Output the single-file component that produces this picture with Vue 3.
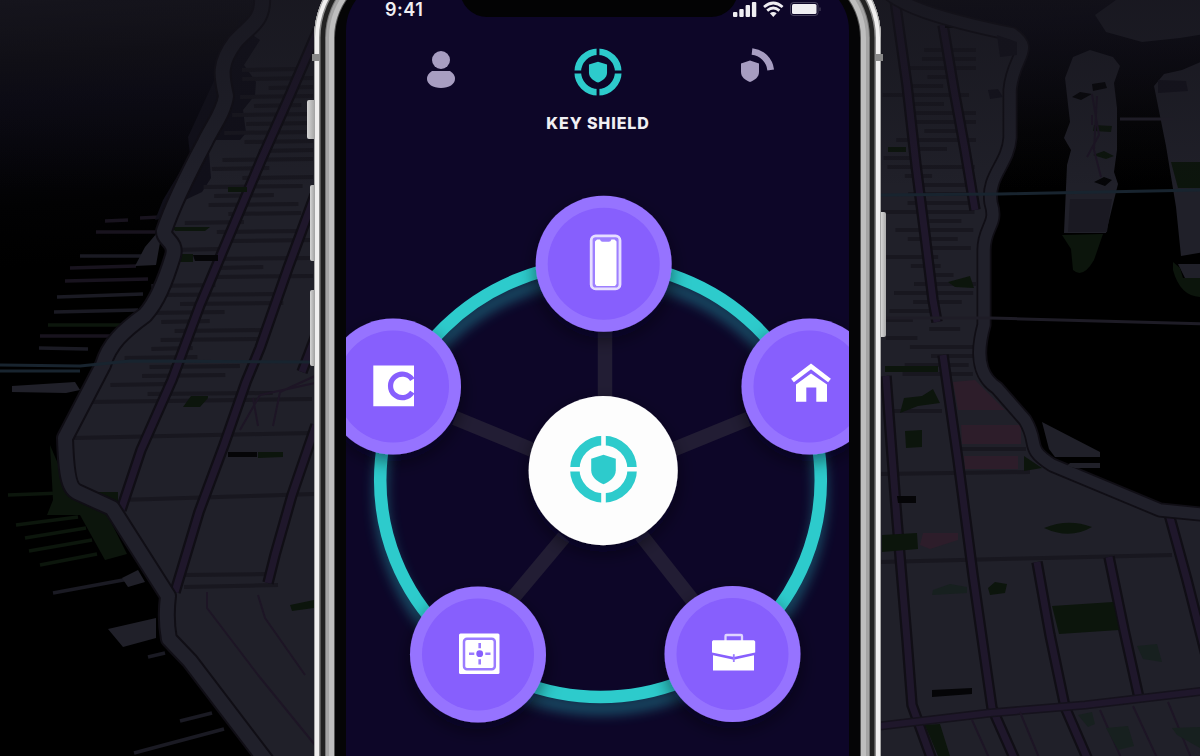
<script setup>
const nodes = [
  { id: 'phone', x: 603.7, y: 263.7 },
  { id: 'vault', x: 393, y: 386.5 },
  { id: 'home', x: 809.5, y: 386.5 },
  { id: 'safe', x: 478, y: 654.5 },
  { id: 'work', x: 732.5, y: 654 },
]

const spokes = ['M605 300V420', 'M455 418 535 451', 'M748 419 672 450', 'M512 599 564 537', 'M697 606 641 535']

const leftCoast = 'M262 -5C264 22 250 25 235 42C218 65 222 77 226 96C224 112 212 127 205 142C188 174 172 207 164 231C163 240 177 241 173 256C165 282 157 302 145 315C123 331 109 344 103 365L65 438C66 470 68 488 77 492L112 508L168 596C165 620 168 633 169 639L190 661L270 766'
const rightCoast = 'M885 -10C900 5 935 18 1012 34C1035 50 1013 55 1010 90V138C1008 165 987 175 991 203C998 225 984 226 984 250V325C973 365 985 380 997 388L1025 420C1040 445 1024 447 1052 465L1160 510L1210 515'

const avenues = [
  'M318 30 290 95 262 158 235 222 200 305 172 380 141 450 121 510',
  'M315 195 288 268 260 348 246 382 224 445 199 512 175 592',
  'M318 330 302 372', 'M316 425 292 495 275 555 268 583',
  'M895 0 907 85 916 165 925 235 933 300 937 322',
  'M943 25 954 90 965 150 975 210',
  'M886 376 892 455 897 520 907 640 912 705 932 760',
  'M943 355 958 460 973 575 992 708 1015 760',
  'M1037 562 1050 635 1065 707 1088 760',
  'M1109 557 1124 630 1139 698',
  'M1169 514 1187 580 1206 655',
]

// Cross streets: x start, x end, y start, y end
const streets = [
  [88, 312, 402, 399], [74, 312, 438, 433], [120, 314, 500, 494], [184, 270, 575, 574], [184, 278, 587, 585],
  [880, 1030, 474, 472], [880, 1172, 562, 555], [960, 1026, 449, 449], [884, 942, 411, 411],
]
let seed = 17
const rnd = () => ((seed = (seed * 16807) % 2147483647) / 2147483647)
for (let y = 70; y < 395; y += 9) {
  const left = y < 200 ? 242 - (y - 70) * 0.35 : 188 - (y - 200) * 0.43
  const a = left + rnd() * 60
  streets.push([a, Math.min(313, a + 35 + rnd() * 95), y, y - 1])
  const b = 882 + rnd() * 50
  streets.push([b, Math.min(976, b + 25 + rnd() * 75), y - 20, y - 20])
}

// Piers: x start, y start, x end, y end, colour group
const piers = [
  [105, 221, 128, 220, 'v'], [140, 218, 160, 217, 'v'], [96, 232, 155, 232, 'v'], [80, 256, 142, 256, 's'],
  [70, 268, 136, 266, 'v'], [65, 281, 148, 279, 'v'], [57, 297, 143, 294, 's'], [54, 312, 138, 310, 's'],
  [48, 325, 128, 325, 'g'], [40, 336, 110, 336, 'v'], [39, 348, 88, 349, 's'], [8, 495, 62, 493, 'g'],
  [16, 525, 78, 517, 'g'], [25, 538, 86, 528, 'g'], [29, 551, 92, 540, 'g'], [40, 565, 97, 554, 'g'],
  [53, 593, 134, 578, 's'], [148, 657, 165, 653, 's'], [180, 721, 212, 713, 's'], [134, 753, 224, 729, 's'],
]
const bars = [5, 8, 12, 15]
</script>

<template>
  <main class="scene">
    <svg class="map" viewBox="0 0 1200 756" aria-hidden="true">
      <defs>
        <linearGradient id="water" x1="0" y1="0" x2="0.12" y2="1">
          <stop offset="0" stop-color="#16151d" /><stop offset=".08" stop-color="#0d0c12" />
          <stop offset=".13" stop-color="#090812" /><stop offset=".27" stop-color="#020203" /><stop offset=".35" stop-color="#000" />
        </linearGradient>
        <linearGradient id="fade" x1="0" y1="0" x2="0" y2="1">
          <stop offset="0" stop-color="#15141c" stop-opacity=".65" /><stop offset=".25" stop-color="#121118" stop-opacity="0" />
        </linearGradient>
      </defs>
      <rect width="1200" height="756" fill="url(#water)" />
      <g class="piers"><line v-for="(p, i) in piers" :key="i" :class="p[4]" :x1="p[0]" :y1="p[1]" :x2="p[2]" :y2="p[3]" /></g>
      <path class="land" d="M12 386 75 382 80 390 66 393 12 392ZM108 629 156 618V638L123 647ZM122 578 138 570 145 582 128 587ZM163 226 145 247 135 266 156 265Z" />
      <path class="park" d="M50 445 53 500 47 515 80 515 105 560 127 554 105 510 70 492Z" />
      <path class="cove" d="M240 20 212 85 188 137 190 155 163 200 155 220 180 215 215 155 230 100 244 60Z" />
      <path class="land" :d="leftCoast + 'H330V-5Z'" />
      <path class="cove" d="M245 30 260 40 244 65 256 82 255 95 243 110 246 133 240 140 208 140 211 178 202 192 185 200 205 150 230 100 230 55Z" />
      <path class="land" :d="rightCoast + 'V760H870V-10Z'" />
      <path class="rose" d="M953 382 975 380 1005 410H958ZM961 425H1021V444H962ZM964 456H1018V469H965ZM923 533H958V540L930 549 920 545Z" />
      <g class="streets"><line v-for="(s, i) in streets" :key="i" :x1="s[0]" :x2="s[1]" :y1="s[2]" :y2="s[3]" /></g>
      <g class="avenue-edge"><path v-for="a in avenues" :key="a" :d="a" /></g>
      <g class="avenue"><path v-for="a in avenues" :key="a" :d="a" /></g>
      <path class="avenue-edge cross" d="M880 726 990 713 1085 705 1205 691" />
      <path class="avenue cross" d="M880 726 990 713 1085 705 1205 691" />
      <path class="lane" d="M207 592V608L258 675 315 745M258 595 265 618 305 675M972 720 990 760M1020 712 1040 760M1100 710 1122 760M1133 706 1158 760M1168 702 1192 760M240 430 260 395 315 383M258 426 253 398M273 426 280 392 315 376" />
      <path class="park" d="M228 187H247V192H228ZM172 227H210L205 231H175ZM180 254H193V262H180ZM83 492H118V501L108 503ZM191 396H208V398L200 407H183ZM258 452H283V457L258 458ZM290 605 314 600V608L292 611ZM904 398 922 396 933 389 940 403 918 406 900 413ZM905 431 922 430 922 447 906 448ZM882 535 917 533 918 549 882 552ZM1024 456 1042 468 1024 471ZM1044 528Q1068 518 1092 527Q1070 540 1044 528ZM988 588 995 582 1007 584 1005 593 990 595ZM1052 606 1113 602 1119 630 1059 634ZM925 725 940 724 950 756 938 756ZM888 147H906V152H888ZM948 282 970 276 974 288 955 287ZM885 366H938V372H885ZM1173 518 1200 518V521Z" />
      <path class="teal" d="M933 590 950 584 967 587V593L932 595ZM1137 646 1157 644 1162 662 1143 659ZM1078 715 1092 712 1095 724 1088 727ZM1106 728 1128 726 1134 746 1118 750ZM1172 728 1200 727V748L1177 735Z" />
      <path class="hole" d="M193 255H218V261H195ZM228 452H257V457H228ZM897 496H916V503H898ZM932 690 972 688V694L932 697ZM945 24H970V28H945Z" />
      <path class="coast-edge left" :d="leftCoast" /><path class="coast left" :d="leftCoast" />
      <path class="coast-edge" :d="rightCoast" /><path class="coast" :d="rightCoast" />
      <path class="land" d="M1042 422 1100 452V457H1055L1049 449ZM1067 466 1070 463H1100V468H1075Z" />
      <path class="land" d="M1065 78 1073 57 1090 50 1113 57 1120 66 1114 83 1117 108V150L1114 172 1118 184 1113 204 1106 233H1064L1067 165 1071 150 1064 138 1070 122Z" />
      <path class="park" d="M1062 235 1103 234 1094 260Q1083 279 1073 270L1071 249Z" />
      <path class="park" d="M1094 125 1112 126 1111 132 1093 131ZM1093 155 1104 151 1114 156 1106 159Z" />
      <path class="hole" d="M1072 97 1080 92 1092 94 1081 100ZM1092 84 1105 82 1107 88 1093 91ZM1094 182 1104 177 1112 180 1105 186Z" />
      <path class="lane" d="M1092 94 1099 135 1087 157M1097 96 1094 150 1101 177M1092 115V125" />
      <path class="land" d="M1095 15 1116 0H1205V34L1180 38 1142 42 1106 32ZM1154 86 1164 74 1182 70 1205 60V252L1181 256 1176 207 1166 146ZM1178 264H1205V278H1185Z" />
      <path class="park" d="M1171 162H1200V188H1178ZM1173 262 1180 268 1183 278H1200V297Q1180 296 1173 270Z" />
      <path class="deep" d="M1158 80 1186 81 1188 91 1158 93ZM997 35 1017 42V55L1000 57ZM988 90 998 89 1003 97 990 99Z" />
      <path class="shade" d="M1070 199H1112L1107 232H1068Z" />
      <rect width="1200" height="756" fill="url(#fade)" />
      <path class="water-line" d="M0 365 80 366 130 361 314 362M0 371 80 371M880 195 1000 194 1205 190" />
      <path class="bridge" d="M880 318 990 318 1205 324M1120 119H1173" />
    </svg>

    <section class="phone">
      <i class="button mute"></i><i class="button up"></i><i class="button down"></i><i class="button power"></i>
      <i class="band west"></i><i class="band east"></i>
      <div class="screen">
        <div class="notch"></div>
        <header class="status">
          <span class="time">9:41</span>
          <svg class="signals" viewBox="0 0 92 20" width="92" height="20">
            <g fill="#efeef2">
              <rect v-for="(h, i) in bars" :key="h" :x="2 + i * 6.3" :y="17 - h" width="4.4" :height="h" rx="1" />
              <path d="M42.3 17 38.9 13.3Q42.3 10.5 45.7 13.3Z" />
              <rect x="61" y="4" width="24.5" height="10" rx="1.5" />
            </g>
            <g fill="none" stroke="#efeef2">
              <path d="M33 7Q42.3 -1 51.6 7M36.2 10.6Q42.3 5.4 48.4 10.6" stroke-width="2.7" />
              <rect x="59.5" y="2.5" width="27.5" height="13" rx="3" opacity=".25" />
              <path d="M89 7.5V11" opacity=".3" />
            </g>
          </svg>
        </header>
        <nav class="tabs">
          <svg class="user" viewBox="0 0 30 40" width="30" height="40" fill="#a79dc1">
            <circle cx="15" cy="12" r="9" /><path d="M6 23H24Q29 26 29 31C29 36 23 40 15 40S1 36 1 31Q1 26 6 23Z" />
          </svg>
          <div class="brand">
            <svg viewBox="-34 -34 68 68" width="48" height="48">
              <circle r="28.7" fill="none" stroke="#2dcbcc" stroke-width="9.5" />
              <path d="M0-35V-18M0 18V35M-35 0H-18M18 0H35" stroke="#0d0628" stroke-width="4" />
              <path d="M0-14.5 12.8-10.5V1C12.8 8 6 12.5 0 15-6 12.5-12.8 8-12.8 1V-10.5Z" fill="#2dcbcc" />
            </svg>
            <h1>KEY SHIELD</h1>
          </div>
          <svg class="scan" viewBox="0 0 36 40" width="36" height="40">
            <path d="M10 14.5 19 17.5V26C19 31 15 34 10 36 5 34 1 31 1 26V17.5Z" fill="#a79dc1" />
            <path d="M12 5.5A21 21 0 0 1 30.7 24" fill="none" stroke="#a79dc1" stroke-width="6.7" />
          </svg>
        </nav>
        <svg class="network" viewBox="346 150 503 606" width="503" height="606">
          <defs>
            <filter id="glow" x="-20%" y="-20%" width="140%" height="140%"><feGaussianBlur stdDeviation="6" /></filter>
            <filter id="lift" x="-40%" y="-40%" width="180%" height="190%"><feDropShadow dx="0" dy="7" stdDeviation="9" flood-color="#05020f" flood-opacity=".5" /></filter>
          </defs>
          <ellipse cx="600.5" cy="492" rx="220" ry="216" fill="none" stroke="#25a9b7" stroke-width="14" opacity=".42" filter="url(#glow)" />
          <ellipse cx="600.5" cy="480.3" rx="220.3" ry="216.7" fill="none" stroke="#2dcbcc" stroke-width="12.5" />
          <path v-for="s in spokes" :key="s" :d="s" fill="none" stroke="#221d34" stroke-width="14.5" />
          <circle cx="603.2" cy="470.6" r="74.6" fill="#fdfdfd" filter="url(#lift)" />
          <g transform="translate(603.5 469.2)">
            <circle r="28.7" fill="none" stroke="#2dcbcc" stroke-width="9.5" />
            <path d="M0-35V-18M0 18V35M-35 0H-18M18 0H35" stroke="#fdfdfd" stroke-width="4.6" />
            <path d="M0-14.5 12.3-10.5V1C12.3 8 6 12.5 0 15-6 12.5-12.3 8-12.3 1V-10.5Z" fill="#2dcbcc" />
          </g>
          <g v-for="n in nodes" :key="n.id" filter="url(#lift)">
            <circle :cx="n.x" :cy="n.y" r="68" fill="#9673ff" /><circle :cx="n.x" :cy="n.y" r="56" fill="#875ffd" />
          </g>
          <g fill="#fff">
            <rect x="591.2" y="235.9" width="28.8" height="53" rx="4.5" fill="#9e80ff" stroke="#e6deff" stroke-width="2.8" />
            <path d="M597 239.5H600Q600.6 241.8 602.5 241.8H609Q610.8 241.8 611.4 239.5H614.5L616.5 241.5V284L615 286H596.5L595 284V241.5Z" />
            <path d="M373.3 365.5H414V406.3H373.3Z" />
            <path d="M412.3 379.6A11.8 11.8 0 1 0 412.3 392.2" fill="none" stroke="#875ffd" stroke-width="5.2" />
            <path d="M792.5 380.5 811 366.5 829.5 380.5" fill="none" stroke="#fff" stroke-width="4.6" />
            <path d="M796 384.5 811 373.5 827 384.5V401.7H816.3V387.5H806.3V401.7H796Z" />
            <rect x="459" y="633.5" width="40.5" height="40.5" rx="1.5" />
            <rect x="464" y="638.8" width="30.8" height="30.5" rx="3" fill="none" stroke="#9b7cff" stroke-width="2.5" />
            <circle cx="479.7" cy="653.7" r="3.4" fill="#875ffd" />
            <path d="M479.7 643V664.5M469 653.7H490.5" stroke="#9b7cff" stroke-width="2.6" stroke-dasharray="5.3 11" />
            <path d="M725.5 641V636Q725.5 635 726.5 635H741Q742 635 742 636V641" fill="none" stroke="#dfd4ff" stroke-width="2.3" />
            <path d="M713 640.2H754L755.2 641.4V652.4L733.8 657 712 652.4V641.4ZM713 655.2 733.8 659.7 754 655.2V670.5H713Z" />
            <path d="M733.8 654.2V662" stroke="#9b7cff" stroke-width="1.8" />
          </g>
        </svg>
      </div>
    </section>
  </main>
</template>

<style>
body { margin: 0; background: #000; overflow: hidden; }
</style>

<style scoped>
.scene { position: relative; width: 1200px; height: 756px; overflow: hidden; background: #000; }
.map { position: absolute; inset: 0; width: 1200px; height: 756px; filter: blur(.7px); }
.land { fill: #202029; }
.deep { fill: #14131d; }
.shade { fill: #1a1922; }
.cove { fill: #100f19; }
.park { fill: #0c150c; }
.teal { fill: #17201f; }
.rose { fill: #2d1d2a; }
.hole { fill: #050507; }
.streets { stroke: #18171f; stroke-width: 4; }
.piers { stroke-width: 3.5; }
.piers .s { stroke: #1a1a23; }
.piers .v { stroke: #18131e; }
.piers .g { stroke: #0c160c; }
.avenue, .avenue-edge, .coast, .coast-edge, .lane, .water-line, .bridge { fill: none; stroke-linejoin: round; }
.avenue-edge { stroke: #100e15; stroke-width: 11.5; }
.avenue { stroke: #1f172b; stroke-width: 7; }
.avenue.cross { stroke-width: 6; }
.avenue-edge.cross { stroke-width: 9; stroke: #15121c; }
.coast-edge { stroke: #100e15; stroke-width: 15; }
.coast { stroke: #20202a; stroke-width: 11.5; }
.coast-edge.left { stroke-width: 18; }
.coast.left { stroke-width: 14; }
.lane { stroke: #1d1525; stroke-width: 2; }
.water-line { stroke: #18242f; stroke-width: 3; }
.bridge { stroke: #1e1c26; stroke-width: 3; }

.phone {
  position: absolute; left: 314px; top: -50px; width: 567px; height: 930px; box-sizing: border-box;
  padding: 0 32px; border-radius: 88px; background: #050506;
  box-shadow: inset 0 0 0 1px #a6a6a6, inset 0 0 0 5px #f0efef, inset 0 0 0 6.5px #8a8a8a,
    inset 0 0 0 11px #222, inset 0 0 0 12px #777, inset 0 0 0 15px #a4a4a4, inset 0 0 0 20px #bebebe, inset 0 0 0 21px #555;
}
.button { position: absolute; background: linear-gradient(90deg, #d5d5d5, #aaa); border-radius: 2px 0 0 2px; }
.mute { left: -7px; top: 150px; width: 7px; height: 39px; }
.up { left: -4px; top: 235px; width: 4px; height: 76px; }
.down { left: -4px; top: 340px; width: 4px; height: 76px; }
.power { right: -5px; top: 262px; width: 5px; height: 125px; border-radius: 0 2px 2px 0; }
.band { position: absolute; top: 104px; width: 8px; height: 7px; background: #888; }
.west { left: -2px; }
.east { right: -2px; }
.screen {
  position: relative; width: 503px; height: 776px; margin-top: 30px; padding-top: 20px; box-sizing: border-box;
  overflow: hidden; background: #0d0628; border-radius: 50px 50px 0 0; display: flex; flex-direction: column;
}
.notch { position: absolute; left: 114px; top: 0; width: 278px; height: 37px; border-radius: 0 0 27px 27px; background: #030304; }
.status { height: 36px; display: flex; justify-content: space-between; padding: 0 22px 0 39px; }
.time { font: 600 18px/20px Inter, sans-serif; letter-spacing: .5px; color: #efeef2; }
.signals { flex: none; margin-right: 4px; }
.tabs { height: 114px; display: flex; justify-content: space-between; align-items: flex-start; padding: 0 73px 0 80px; box-sizing: border-box; }
.user { margin-top: 12px; }
.scan { margin-top: 10px; }
.brand { width: 130px; margin-top: 12px; display: flex; flex-direction: column; align-items: center; }
h1 { margin: 17px 0 0; font: 800 16px/20px Inter, sans-serif; letter-spacing: .88px; white-space: nowrap; color: #f0eff3; }
.network { display: block; flex: none; }
</style>
